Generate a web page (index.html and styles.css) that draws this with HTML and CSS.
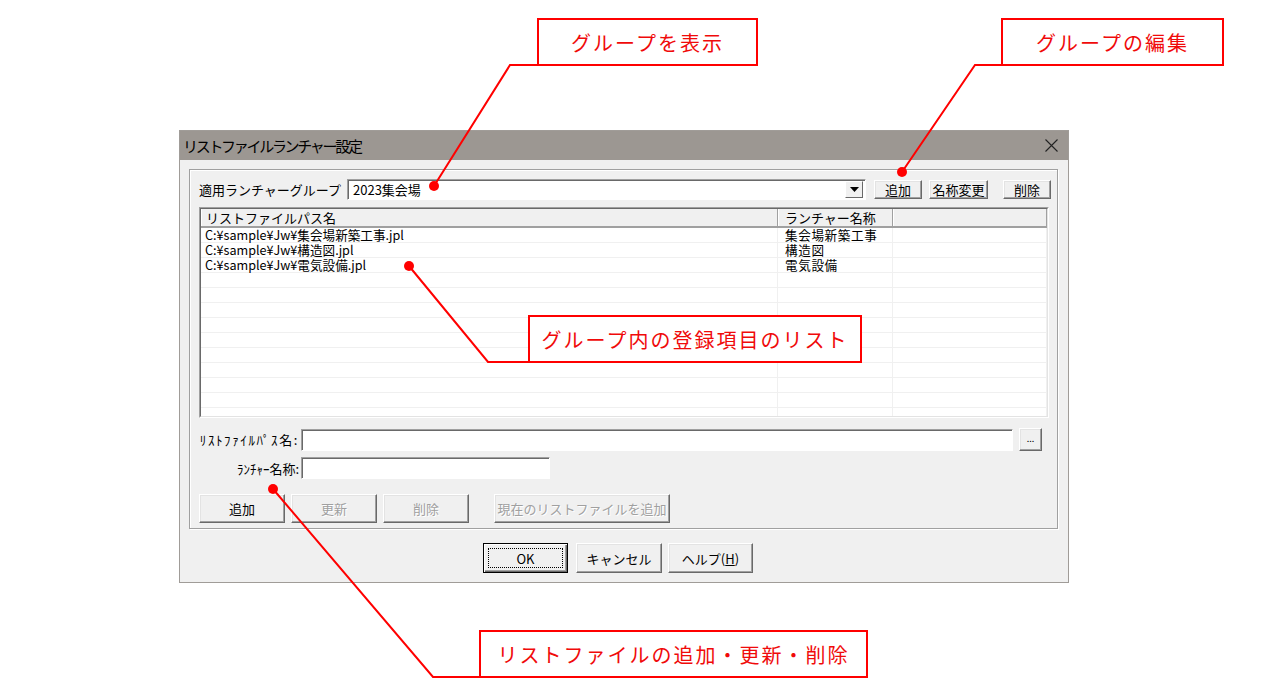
FILE: index.html
```html
<!DOCTYPE html>
<html lang="ja">
<head>
    <meta charset="UTF-8">
    <title>リストファイルランチャー設定</title>
    <link rel="stylesheet" href="styles.css">
</head>
<body>
<div class="page">
    <div class="dialog">
        <div class="titlebar">
            <span class="title">リストファイルランチャー設定</span>
            <svg class="close" width="13" height="13" viewBox="0 0 13 13">
                <path d="M0.5 0.5 L12.5 12.5 M12.5 0.5 L0.5 12.5" stroke="#222" stroke-width="1.1" fill="none"/>
            </svg>
        </div>
        <div class="dlg-body">
            <div class="groupbox">
                <div class="group-row">
                    <span class="group-label">適用ランチャーグループ</span>
                    <div class="combo">
                        <span class="combo-text">2023集会場</span>
                        <span class="combo-btn">
                            <svg width="9" height="5" viewBox="0 0 9 5"><path d="M0 0 H9 L4.5 5 Z" fill="#000"/></svg>
                        </span>
                    </div>
                    <button class="btn btn-add-group">追加</button>
                    <button class="btn btn-rename">名称変更</button>
                    <button class="btn btn-del-group">削除</button>
                </div>

                <div class="listview">
                    <div class="lv-inner">
                        <div class="lv-header">
                            <div class="lv-hcell">リストファイルパス名</div>
                            <div class="lv-hcell">ランチャー名称</div>
                            <div class="lv-hcell"></div>
                        </div>
                        <div class="lv-row"><div class="lv-cell">C:¥sample¥Jw¥集会場新築工事.jpl</div><div class="lv-cell c2">集会場新築工事</div><div class="lv-cell"></div></div>
                        <div class="lv-row"><div class="lv-cell">C:¥sample¥Jw¥構造図.jpl</div><div class="lv-cell c2">構造図</div><div class="lv-cell"></div></div>
                        <div class="lv-row"><div class="lv-cell">C:¥sample¥Jw¥電気設備.jpl</div><div class="lv-cell c2">電気設備</div><div class="lv-cell"></div></div>
                        <div class="lv-row"><div class="lv-cell"></div><div class="lv-cell"></div><div class="lv-cell"></div></div>
                        <div class="lv-row"><div class="lv-cell"></div><div class="lv-cell"></div><div class="lv-cell"></div></div>
                        <div class="lv-row"><div class="lv-cell"></div><div class="lv-cell"></div><div class="lv-cell"></div></div>
                        <div class="lv-row"><div class="lv-cell"></div><div class="lv-cell"></div><div class="lv-cell"></div></div>
                        <div class="lv-row"><div class="lv-cell"></div><div class="lv-cell"></div><div class="lv-cell"></div></div>
                        <div class="lv-row"><div class="lv-cell"></div><div class="lv-cell"></div><div class="lv-cell"></div></div>
                        <div class="lv-row"><div class="lv-cell"></div><div class="lv-cell"></div><div class="lv-cell"></div></div>
                        <div class="lv-row"><div class="lv-cell"></div><div class="lv-cell"></div><div class="lv-cell"></div></div>
                        <div class="lv-row"><div class="lv-cell"></div><div class="lv-cell"></div><div class="lv-cell"></div></div>
                        <div class="lv-row"><div class="lv-cell"></div><div class="lv-cell"></div><div class="lv-cell"></div></div>
                    </div>
                </div>

                <div class="field-row first">
                    <span class="field-label wide">ﾘｽﾄﾌｧｲﾙﾊﾟｽ名:</span>
                    <div class="edit edit-path"></div>
                    <button class="btn btn-browse">...</button>
                </div>
                <div class="field-row second">
                    <span class="field-label">ﾗﾝﾁｬｰ名称:</span>
                    <div class="edit edit-name"></div>
                </div>

                <div class="item-buttons">
                    <button class="btn btn-item">追加</button>
                    <button class="btn btn-item disabled">更新</button>
                    <button class="btn btn-item disabled">削除</button>
                    <button class="btn btn-current disabled">現在のリストファイルを追加</button>
                </div>
            </div>

            <div class="dlg-footer">
                <button class="btn btn-ok"><span class="focus">OK</span></button>
                <button class="btn btn-cancel">キャンセル</button>
                <button class="btn btn-help">ヘルプ(<u>H</u>)</button>
            </div>
        </div>
    </div>

    <!-- annotation leaders -->
    <svg class="leaders" width="1272" height="692" viewBox="0 0 1272 692">
        <g stroke="#ff0000" stroke-width="2" fill="none">
            <polyline points="537,65 510,65 434,186"/>
            <polyline points="1002,65 975,65 902,172"/>
            <polyline points="528,362 488,362 409,266"/>
            <polyline points="479,677 433,677 273,489"/>
        </g>
        <g fill="#ff0000">
            <circle cx="434" cy="186" r="5"/>
            <circle cx="902" cy="172" r="5"/>
            <circle cx="409" cy="266" r="5"/>
            <circle cx="273" cy="489" r="5"/>
        </g>
    </svg>

    <div class="callout c-show">グループを表示</div>
    <div class="callout c-edit">グループの編集</div>
    <div class="callout c-list">グループ内の登録項目のリスト</div>
    <div class="callout c-items">リストファイルの追加・更新・削除</div>
</div>
</body>
</html>
```

FILE: styles.css
```css
body {
    margin: 0;
    background-color: #FFFFFF;
    font-family: "Noto Sans CJK JP", "Noto Sans", sans-serif;
}
.page {
    position: relative;
    width: 1272px;
    height: 692px;
    padding: 130px 0 0 179px;
    box-sizing: border-box;
    overflow: hidden;
}

/* dialog window */
.dialog {
    width: 890px;
    height: 453px;
    box-sizing: border-box;
    border: 1px solid #A09C98;
    background-color: #F0F0F0;
    font-size: 13px;
    color: #000;
}
.titlebar {
    height: 29px;
    background-color: #9C9792;
    display: flex;
    align-items: center;
    justify-content: space-between;
    padding: 0 10px 0 3px;
}
.title {
    font-size: 15px;
    letter-spacing: -2.3px;
    line-height: 29px;
}
.close { display: block; }

.dlg-body {
    padding: 9px 10px 0 9px;
}
.groupbox {
    height: 360px;
    box-sizing: border-box;
    border: 1px solid #A0A0A0;
    box-shadow: inset 1px 1px #FFFFFF, 1px 1px #FFFFFF;
    padding: 9px 0 0 9px;
}

/* buttons */
.btn {
    font-family: inherit;
    font-size: 13px;
    line-height: 1;
    color: #000;
    background-color: #F0F0F0;
    border: 1px solid;
    border-color: #FFFFFF #696969 #696969 #FFFFFF;
    box-shadow: inset -1px -1px #A0A0A0, inset 1px 1px #E3E3E3;
    padding: 0;
    margin: 0;
    box-sizing: border-box;
    display: flex;
    align-items: center;
    justify-content: center;
}
.btn.disabled {
    color: #A0A0A0;
    text-shadow: 1px 1px #FFFFFF;
}

/* group row */
.group-row {
    display: flex;
    align-items: center;
    height: 21px;
}
.group-label {
    width: 148px;
    flex-shrink: 0;
}
.combo {
    width: 519px;
    height: 21px;
    box-sizing: border-box;
    background-color: #FFFFFF;
    border: 1px solid;
    border-color: #A0A0A0 #FFFFFF #FFFFFF #A0A0A0;
    box-shadow: inset 1px 1px #696969;
    display: flex;
    align-items: center;
    justify-content: space-between;
    padding: 0 2px 0 5px;
}
.combo-text { line-height: 17px; }
.combo-btn {
    width: 18px;
    height: 17px;
    box-sizing: border-box;
    background-color: #F0F0F0;
    border: 1px solid;
    border-color: #FFFFFF #696969 #696969 #FFFFFF;
    display: flex;
    align-items: center;
    justify-content: center;
}
.btn-add-group { width: 48px; height: 19px; margin-left: 8px; }
.btn-rename { width: 59px; height: 19px; margin-left: 7px; }
.btn-del-group { width: 48px; height: 19px; margin-left: 15px; }

/* list view */
.listview {
    margin-top: 7px;
    width: 850px;
    height: 211px;
    box-sizing: border-box;
    border: 1px solid;
    border-color: #A0A0A0 #FFFFFF #FFFFFF #A0A0A0;
}
.lv-inner {
    height: 100%;
    box-sizing: border-box;
    border: 1px solid;
    border-color: #696969 #E3E3E3 #E3E3E3 #696969;
    background-color: #FFFFFF;
    overflow: hidden;
}
.lv-header {
    display: grid;
    grid-template-columns: 577px 115px 1fr;
    height: 19px;
    background-color: #F0F0F0;
    border-bottom: 2px solid #A0A0A0;
    box-sizing: border-box;
}
.lv-hcell {
    border-left: 1px solid #FFFFFF;
    border-right: 1px solid #A0A0A0;
    padding-left: 4px;
    line-height: 17px;
    white-space: nowrap;
}
.lv-hcell + .lv-hcell { padding-left: 6px; }
.lv-row {
    display: grid;
    grid-template-columns: 577px 115px 1fr;
    height: 15px;
    box-sizing: border-box;
    border-bottom: 1px solid #F0F0F0;
}
.lv-cell {
    border-right: 1px solid #F0F0F0;
    padding-left: 4px;
    font-size: 12.6px;
    line-height: 14px;
    white-space: nowrap;
}
.lv-cell.c2 { padding-left: 7px; letter-spacing: 0.6px; }

/* edit fields */
.field-row {
    display: flex;
    align-items: center;
}
.field-row.first { margin-top: 10px; }
.field-row.second { margin-top: 6px; }
.field-label {
    width: 100px;
    margin-right: 2px;
    text-align: right;
    white-space: nowrap;
}
.field-label.wide { letter-spacing: 1.6px; }
.edit {
    box-sizing: border-box;
    background-color: #FFFFFF;
    border: 1px solid;
    border-color: #A0A0A0 #FFFFFF #FFFFFF #A0A0A0;
    box-shadow: inset 1px 1px #696969;
}
.edit-path { width: 712px; height: 22px; }
.edit-name { width: 249px; height: 22px; }
.btn-browse {
    width: 23px;
    height: 23px;
    margin-left: 6px;
    font-size: 9px;
    padding-bottom: 2px;
}

.item-buttons {
    display: flex;
    margin-top: 15px;
}
.btn-item { width: 86px; height: 29px; margin-right: 6px; }
.btn-item:nth-child(3) { margin-right: 25px; }
.btn-current { width: 176px; height: 29px; }

/* footer buttons */
.dlg-footer {
    display: flex;
    margin-top: 14px;
    padding-left: 294px;
}
.btn-ok {
    width: 85px;
    height: 30px;
    border: 1px solid #000;
    box-shadow: inset 1px 1px #FFFFFF, inset -1px -1px #696969, inset -2px -2px #A0A0A0;
    padding: 4px;
}
.focus {
    width: 100%;
    height: 100%;
    box-sizing: border-box;
    border: 1px dotted #000;
    display: flex;
    align-items: center;
    justify-content: center;
}
.btn-cancel { width: 86px; height: 30px; margin-left: 8px; }
.btn-help { width: 85px; height: 30px; margin-left: 6px; }

/* annotations */
.leaders {
    position: absolute;
    left: 0;
    top: 0;
}
.callout {
    position: absolute;
    height: 48px;
    box-sizing: border-box;
    border: 2px solid #FF0000;
    background-color: #FFFFFF;
    color: #F00A0A;
    font-size: 20px;
    letter-spacing: 2px;
    display: flex;
    align-items: center;
    justify-content: center;
    white-space: nowrap;
}
.c-show { left: 537px; top: 18px; width: 221px; }
.c-edit { left: 1001px; top: 18px; width: 223px; }
.c-list { left: 528px; top: 315px; width: 334px; }
.c-items { left: 479px; top: 630px; width: 389px; }
```
